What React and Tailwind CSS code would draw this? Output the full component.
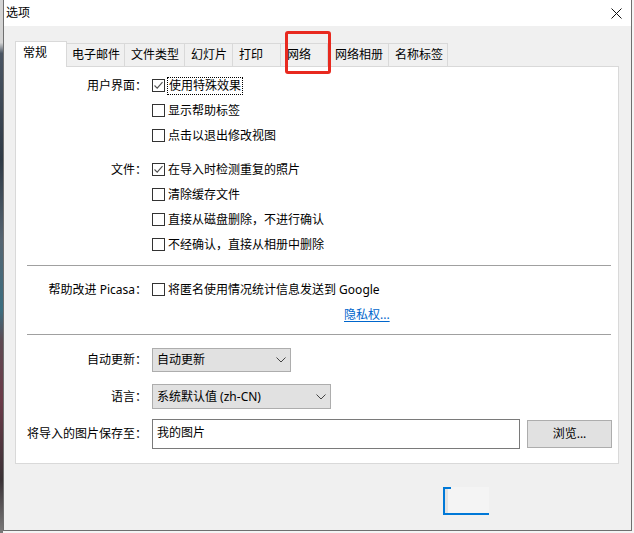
import React from "react";

function Check({ checked }) {
  return (
    <span className="w-[13px] h-[13px] border border-[#333333] bg-white flex items-center justify-center shrink-0">
      {checked && (
        <svg width="11" height="11" viewBox="0 0 11 11">
          <path d="M1.5 5.5 L4.2 8.2 L9.5 2.2" fill="none" stroke="#505050" strokeWidth="1.1" />
        </svg>
      )}
    </span>
  );
}

function CheckRow({ label, checked, text, focus }) {
  return (
    <div className="h-[25px] flex items-center">
      <div className="w-[131px] text-right whitespace-nowrap">{label}</div>
      <div className="ml-[5px] flex items-center">
        <Check checked={checked} />
        {focus ? (
          <span className="ml-[2px] h-[18px] px-[1px] flex items-center border border-dotted border-black whitespace-nowrap">
            {text}
          </span>
        ) : (
          <span className="ml-[3px] whitespace-nowrap">{text}</span>
        )}
      </div>
    </div>
  );
}

function Chevron() {
  return (
    <svg width="10" height="6" viewBox="0 0 10 6">
      <path d="M0.5 0.5 L5 5 L9.5 0.5" fill="none" stroke="#444" strokeWidth="1" />
    </svg>
  );
}

const tabs = [
  { t: "电子邮件", w: "w-[58px]", pl: "pl-[5px]" },
  { t: "文件类型", w: "w-[60px]", pl: "pl-[6px]" },
  { t: "幻灯片", w: "w-[48px]", pl: "pl-[6px]" },
  { t: "打印", w: "w-[48px]", pl: "pl-[6px]" },
  { t: "网络", w: "w-[47px]", pl: "pl-[6px]" },
  { t: "网络相册", w: "w-[61px]", pl: "pl-[7px]" },
  { t: "名称标签", w: "w-[59px]", pl: "pl-[6px]" },
];

export default function App() {
  return (
    <div className="w-[634px] h-[533px] flex bg-[#f4f4f4] text-[12px] text-black font-['Noto_Sans','Noto_Sans_CJK_SC',sans-serif] overflow-hidden">
      <div className="w-[3px] h-full shrink-0 bg-[linear-gradient(to_bottom,#d4d4d4_0%,#d4d4d4_8%,#4a5563_10%,#2f3a46_30%,#566572_45%,#3b6e80_58%,#5e4a52_64%,#6b3a48_75%,#3a3236_90%,#7a7a7a_100%)]" />
      <div className="w-[629px] h-[531px] shrink-0 relative flex flex-col bg-[#f0f0f0] border-l border-r border-b border-[#6f6f6f]">
        {/* title bar */}
        <div className="h-[26px] bg-white flex items-center justify-between shrink-0">
          <span className="pl-[2px] pb-[1px] leading-none">选项</span>
          <svg className="mr-[9px]" width="11" height="11" viewBox="0 0 11 11">
            <path d="M0.5 0.5 L10.5 10.5 M10.5 0.5 L0.5 10.5" stroke="#111" strokeWidth="1" />
          </svg>
        </div>

        {/* content */}
        <div className="pl-[11px] pt-[15px] flex flex-col">
          <div className="h-[25px] flex items-end">
            <div className="relative z-10 w-[52px] h-[26px] -mb-px bg-white border-l border-t border-r border-[#d9d9d9] pl-[7px] pb-[3px] flex items-center">
              常规
            </div>
            {tabs.map((tb) => (
              <div
                key={tb.t}
                className={`${tb.w} ${tb.pl} h-[23px] border-t border-r border-[#d9d9d9] flex items-center whitespace-nowrap`}
              >
                {tb.t}
              </div>
            ))}
          </div>

          {/* panel */}
          <div className="w-[604px] h-[398px] bg-white border border-[#d9d9d9] flex flex-col pt-[6px]">
            <CheckRow label="用户界面：" checked text="使用特殊效果" focus />
            <CheckRow label="" text="显示帮助标签" />
            <CheckRow label="" text="点击以退出修改视图" />
            <div className="h-[9px]" />
            <CheckRow label="文件：" checked text="在导入时检测重复的照片" />
            <CheckRow label="" text="清除缓存文件" />
            <CheckRow label="" text="直接从磁盘删除，不进行确认" />
            <CheckRow label="" text="不经确认，直接从相册中删除" />

            <div className="mt-[8px] ml-[11px] mr-[7px] h-px bg-[#a0a0a0]" />

            <div className="mt-[11px]">
              <CheckRow label="帮助改进 Picasa：" text="将匿名使用情况统计信息发送到 Google" />
            </div>
            <div className="h-[25px] flex items-center">
              <span className="ml-[328px] text-[#0066cc] underline underline-offset-2">隐私权...</span>
            </div>

            <div className="mt-[7px] ml-[11px] mr-[7px] h-px bg-[#a0a0a0]" />

            <div className="mt-[13px] h-[24px] flex items-center">
              <div className="w-[131px] text-right">自动更新：</div>
              <div className="ml-[5px] w-[139px] h-[24px] bg-[#e1e1e1] border border-[#adadad] flex items-center justify-between pl-[4px] pr-[4px]">
                <span>自动更新</span>
                <Chevron />
              </div>
            </div>

            <div className="mt-[12px] h-[25px] flex items-center">
              <div className="w-[131px] text-right">语言：</div>
              <div className="ml-[5px] w-[179px] h-[25px] bg-[#e1e1e1] border border-[#adadad] flex items-center justify-between pl-[4px] pr-[4px]">
                <span>系统默认值 (zh-CN)</span>
                <Chevron />
              </div>
            </div>

            <div className="mt-[10px] h-[30px] flex items-center">
              <div className="w-[131px] text-right whitespace-nowrap">将导入的图片保存至：</div>
              <div className="ml-[5px] w-[368px] h-[30px] bg-white border border-[#7a7a7a] flex items-start pl-[4px] pt-[4px]">
                我的图片
              </div>
              <div className="ml-[7px] w-[85px] h-[28px] bg-[#e1e1e1] border border-[#adadad] flex items-center justify-center">
                浏览...
              </div>
            </div>
          </div>
        </div>

        {/* red annotation box */}
        <div className="absolute left-[281px] top-[31px] w-[46px] h-[43px] border-[3px] border-[#e8291f] rounded-[3px] pointer-events-none" />

        {/* blue focus artifact */}
        <div className="absolute left-[439px] top-[487px] w-[46px] h-[28px] border-l-2 border-b-2 border-[#0078d7] bg-[#f4f4f4]">
          <div className="w-[6px] h-[2px] bg-[#0078d7]" />
          <div className="absolute left-0 top-[2px] w-[3px] h-[24px] bg-[#e3e3e3]" />
        </div>
      </div>
    </div>
  );
}
